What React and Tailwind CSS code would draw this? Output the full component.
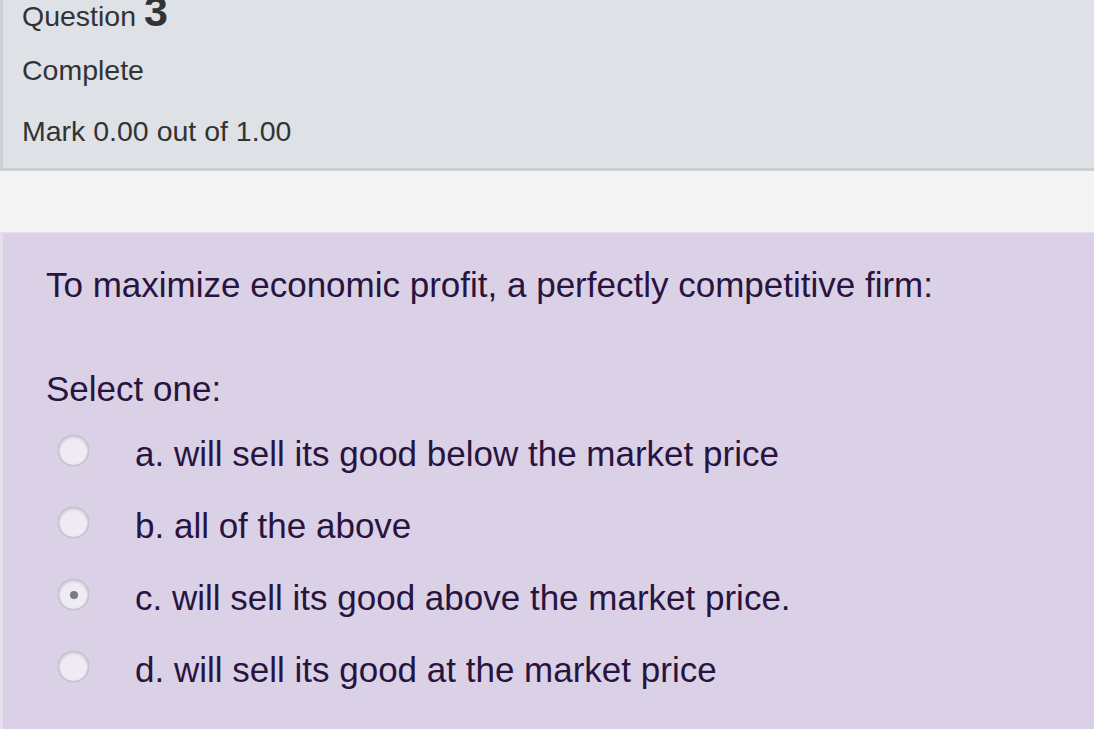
import React from "react";

function Radio({ checked }) {
  return (
    <div className="w-[31px] h-[31px] rounded-full bg-[#efebf4] border border-[#c9c4cf] shadow-[inset_0_1px_3px_rgba(0,0,0,0.18),0_0_1px_rgba(0,0,0,0.2)] flex items-center justify-center shrink-0">
      {checked && <div className="w-[8px] h-[8px] rounded-full bg-[#7a7a7c]" />}
    </div>
  );
}

const options = [
  { t: "a. will sell its good below the market price", c: false },
  { t: "b. all of the above", c: false },
  { t: "c. will sell its good above the market price.", c: true },
  { t: "d. will sell its good at the market price", c: false },
];

export default function App() {
  return (
    <div className="w-[1094px] h-[729px] overflow-hidden bg-[#f4f4f4] font-['Liberation_Sans',Arial,sans-serif]">
      <div className="h-[171px] bg-[#dee2e6] border-l-[3px] border-b-[3px] border-[#cbd0d6] pl-[19px] text-[#333333] overflow-hidden">
        <div className="flex items-baseline mt-[-10px]">
          <span className="text-[28.5px] leading-none">Question</span>
          <span className="text-[43px] leading-none font-bold ml-[8px]">3</span>
        </div>
        <div className="text-[28.5px] leading-none mt-[23px]">Complete</div>
        <div className="text-[28.5px] leading-none mt-[32.5px]">Mark 0.00 out of 1.00</div>
      </div>
      <div className="mt-[61px] h-[497px] bg-[#dbd1e6] border-l-[3px] border-t border-[#e5e0ec] text-[#28143f] overflow-hidden">
        <div className="pl-[43px] pt-[34px] text-[35px] leading-none">
          To maximize economic profit, a perfectly competitive firm:
        </div>
        <div className="pl-[43px] mt-[69px] text-[35px] leading-none">Select one:</div>
        <div className="flex flex-col gap-[37px] mt-[30px]">
          {options.map((o) => (
            <div key={o.t} className="flex items-center h-[35px]">
              <div className="ml-[55px] mt-[-6px]">
                <Radio checked={o.c} />
              </div>
              <span className="ml-[46px] text-[35px] leading-none">{o.t}</span>
            </div>
          ))}
        </div>
      </div>
    </div>
  );
}
